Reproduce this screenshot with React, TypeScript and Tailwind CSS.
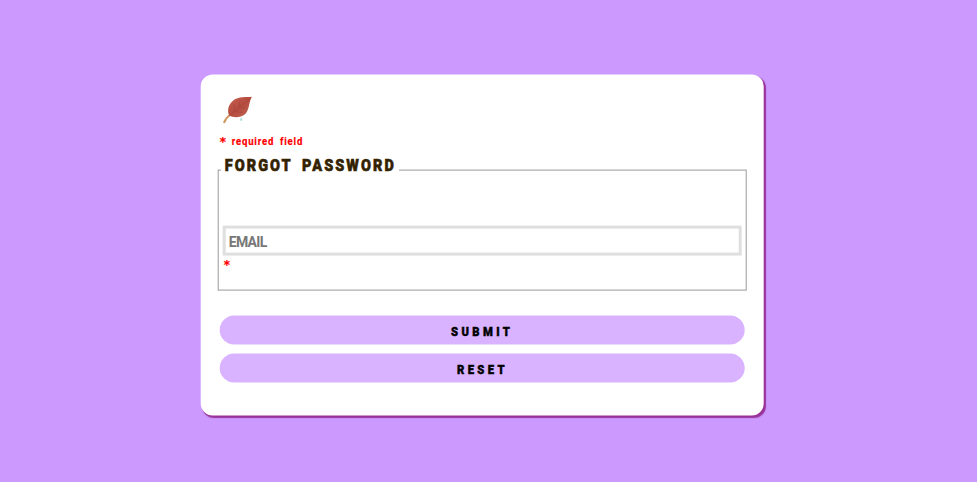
function Leaf() {
  return (
    <svg className="block h-7 w-[30px]" viewBox="0 0 30 28" aria-hidden="true">
      <defs>
        <linearGradient id="leaf" x1="0" y1="0" x2="1" y2="1">
          <stop offset="0" stopColor="#c76052" />
          <stop offset="0.5" stopColor="#b54b3f" />
          <stop offset="1" stopColor="#c36a58" />
        </linearGradient>
      </defs>
      <path d="M8.500 19C6 21 3.500 22.500 2.300 27.500" fill="none" stroke="#cf9a62" strokeWidth="2" />
      <path d="M30.500 1.200C25 2 17 .5 11.500 5C6.500 9 5 15.500 7.500 20C12 22.500 20 22.500 24.500 17.500C28 12.500 27 6 30.500 1.200Z" fill="url(#leaf)" />
      <path d="M8 19.500L28 3.500M13 15L12 8M17.500 11.500L18 5M13 16L21 17M18 12L25 12.500" fill="none" stroke="#9c4037" strokeOpacity=".5" strokeWidth=".8" />
      <path d="M19.500 21.500L18.400 24.500Q19.500 26.500 20.700 24.500Z" fill="#a4ddd7" />
    </svg>
  );
}

export default function App() {
  return (
    <main className="flex h-[482px] w-full justify-center bg-[#cc99ff] pt-[75px] pr-[13px] font-['Roboto','Liberation_Sans',sans-serif] font-bold">
      <form className="h-[341px] w-[563px] -translate-x-[0.3px] -translate-y-[0.4px] rounded-[12px] bg-white px-[17.500px] pt-[21px] shadow-[2px_2px_1px_#993399]" onSubmit={(e) => e.preventDefault()}>
        <div className="pl-[4px]"><Leaf /></div>
        <p className="mt-[10px] flex h-[15px] pl-[1.500px] text-[11px] leading-[15px] tracking-[0.95px] whitespace-nowrap text-[#ff0000] [-webkit-text-stroke:0.2px_#ff0000]">
          <span className="w-[12px] pt-[1px] font-['DejaVu_Sans_Mono',monospace] text-[12px]">*</span>
          <span className="origin-left scale-x-[.87] [word-spacing:3px]">required field</span>
        </p>
        <fieldset className="-mt-[4px] h-[146px] w-[527.500px] border border-[#999999] pr-[3.500px] pl-[4px]">
          <legend className="ml-[-2px] h-[50px] w-[178px] pt-[5px] pl-[3.500px] text-[17px] leading-[30px] font-black tracking-[2.400px] whitespace-nowrap text-[#332200] [-webkit-text-stroke:0.6px_#332200]">
            <span className="inline-block origin-left scale-x-[.85] [word-spacing:5px]">FORGOT PASSWORD</span>
          </legend>
          <input
            aria-label="Email"
            placeholder="EMAIL"
            className="mt-[31px] block h-[30px] w-[519px] border-[3px] border-[#dfdfdf] bg-white px-[3px] pt-[2px] text-[14px] tracking-[-0.700px] outline-none placeholder:text-[#777777]"
          />
          <span className="block pl-[0.500px] font-['DejaVu_Sans_Mono',monospace] text-[12px] leading-[19px] text-[#ff0000] [-webkit-text-stroke:0.2px_#ff0000]">*</span>
        </fieldset>
        <div className="mt-[25px] flex flex-col gap-[9px] px-[1.500px]">
          <button className="h-[29px] rounded-full bg-[#d9b3ff] pt-[2px] pl-[1px] text-[13.500px] font-black tracking-[4.100px] text-black [-webkit-text-stroke:0.5px_black]" type="submit">
            <span className="inline-block scale-x-[.83]">SUBMIT</span>
          </button>
          <button className="h-[29px] rounded-full bg-[#d9b3ff] pt-[2px] pl-[1px] text-[13.500px] font-black tracking-[4.100px] text-black [-webkit-text-stroke:0.5px_black]" type="reset">
            <span className="inline-block scale-x-[.83]">RESET</span>
          </button>
        </div>
      </form>
    </main>
  );
}
